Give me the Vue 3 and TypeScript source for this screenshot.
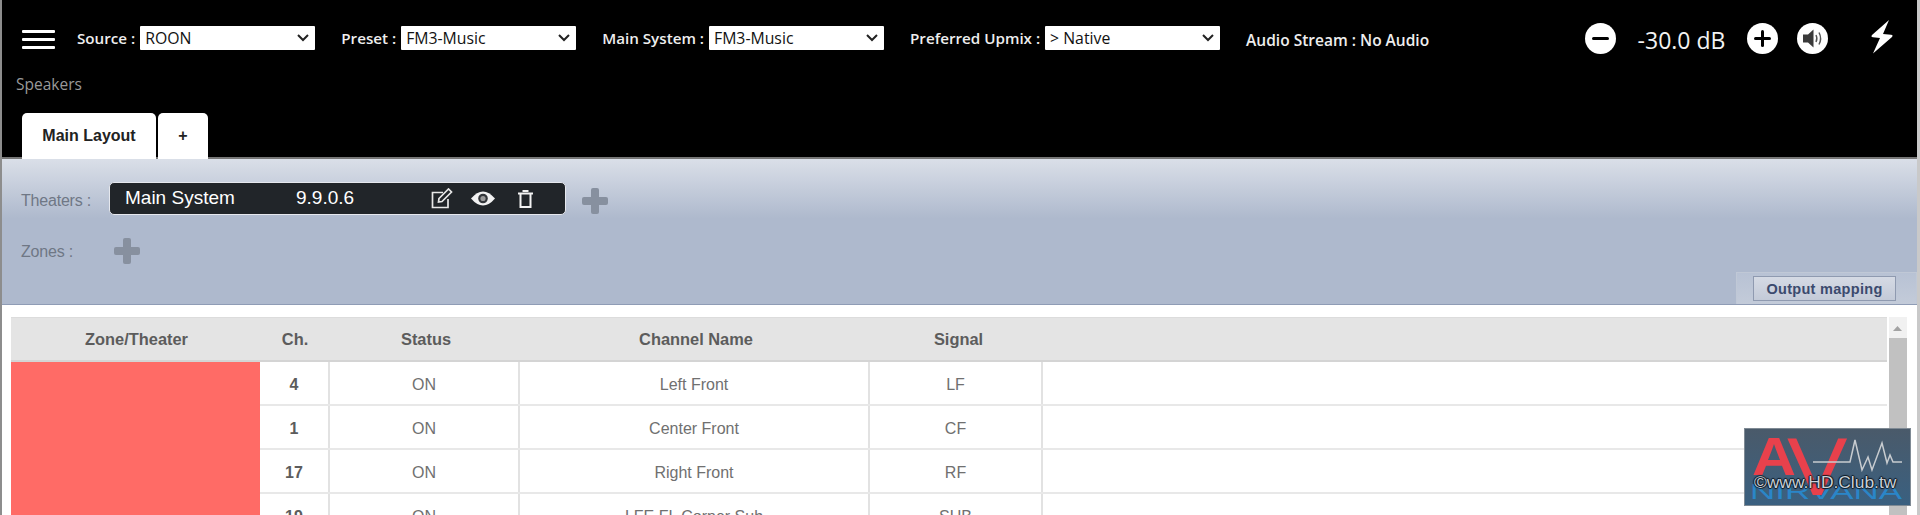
<script setup lang="ts">
interface Row { ch: string; status: string; name: string; signal: string }
const rows: Row[] = [
  { ch: '4', status: 'ON', name: 'Left Front', signal: 'LF' },
  { ch: '1', status: 'ON', name: 'Center Front', signal: 'CF' },
  { ch: '17', status: 'ON', name: 'Right Front', signal: 'RF' },
  { ch: '19', status: 'ON', name: 'LFE FL Corner Sub', signal: 'SUB' },
]
const selects = [
  { label: 'Source :', value: 'ROON' },
  { label: 'Preset :', value: 'FM3-Music' },
  { label: 'Main System :', value: 'FM3-Music' },
  { label: 'Preferred Upmix :', value: '> Native' },
]
</script>

<template>
  <div class="page">
    <header class="top">
      <div class="bar">
        <button class="burger" aria-label="Menu"><i></i><i></i><i></i></button>
        <label v-for="s in selects" :key="s.label" class="field">
          <span>{{ s.label }}</span>
          <select><option>{{ s.value }}</option></select>
        </label>
        <span class="stream">Audio Stream : No Audio</span>
        <div class="volume">
          <svg width="31" height="31" viewBox="0 0 31 31"><circle cx="15.5" cy="15.5" r="15.5" fill="#fff"/><rect x="7" y="14" width="17" height="3" rx="1.5" fill="#000"/></svg>
          <span class="db">-30.0 dB</span>
          <svg width="31" height="31" viewBox="0 0 31 31"><circle cx="15.5" cy="15.5" r="15.5" fill="#fff"/><rect x="7" y="14" width="17" height="3" rx="1.5" fill="#000"/><rect x="14" y="7" width="3" height="17" rx="1.5" fill="#000"/></svg>
          <svg class="spk" width="31" height="31" viewBox="0 0 31 31"><circle cx="15.5" cy="15.5" r="15.5" fill="#fff"/><path d="M6 11.500h5l5.500-5v18l-5.500-5H6z" fill="#3a3a3a"/><path d="M19 12q1.800 3.500 0 7M22 9.500q3.200 6 0 12" fill="none" stroke="#555" stroke-width="1.400"/></svg>
        </div>
        <svg class="bolt" width="24" height="34" viewBox="0 0 24 34"><path d="M19 0 2 15q-1.500 2 1 2.200L10 18 3 33.500 22 17q1.500-2-1-2.200L13 14z" fill="#fff"/></svg>
      </div>
      <div class="crumb">Speakers</div>
      <nav class="tabs">
        <a class="tab main">Main Layout</a>
        <a class="tab add">+</a>
      </nav>
    </header>

    <section class="panel">
      <div class="line theaters">
        <span class="cap">Theaters :</span>
        <div class="theater">
          <span class="t-name">Main System</span>
          <span class="t-ver">9.9.0.6</span>
          <svg class="i-edit" width="22" height="21" viewBox="0 0 22 21" fill="none" stroke="#e8e8e8" stroke-width="1.700"><path d="M17 11v8.500H1.500V4.500H12"/><path d="M8 10.500 17.500 1l3 3L11 13.500l-3.500.5z"/></svg>
          <svg class="i-eye" width="24" height="17" viewBox="0 0 24 17"><path d="M0 8.500q12-14 24 0q-12 14-24 0z" fill="#f2f2f2"/><circle cx="12" cy="8.500" r="4.800" fill="#33363a"/><circle cx="12" cy="8.500" r="2.600" fill="#9a9a9a"/></svg>
          <svg class="i-trash" width="15" height="18" viewBox="0 0 15 18" fill="none" stroke="#f2f2f2" stroke-width="2"><path d="M0 3.500h15"/><path d="M4.500 1h6"/><path d="M2.500 4v13h10V4"/></svg>
        </div>
        <span class="plus" aria-label="Add theater"></span>
      </div>
      <div class="line zones">
        <span class="cap">Zones :</span>
        <span class="plus" aria-label="Add zone"></span>
      </div>
      <div class="mapping"><button>Output mapping</button></div>
    </section>

    <section class="content">
      <div class="table">
        <div class="thead">
          <div class="c zone">Zone/Theater</div>
          <div class="c ch">Ch.</div>
          <div class="c st">Status</div>
          <div class="c nm">Channel Name</div>
          <div class="c sg">Signal</div>
        </div>
        <div class="tbody">
          <div class="swatch"></div>
          <div class="rows">
            <div v-for="r in rows" :key="r.ch" class="row">
              <div class="c ch"><b>{{ r.ch }}</b></div>
              <div class="c st">{{ r.status }}</div>
              <div class="c nm">{{ r.name }}</div>
              <div class="c sg">{{ r.signal }}</div>
              <div class="c rest"></div>
            </div>
          </div>
        </div>
      </div>
      <div class="scroll">
        <svg width="17" height="21" viewBox="0 0 17 21"><path d="M4 14l4.500-5 4.500 5z" fill="#a3a3a3"/></svg>
        <div class="thumb"></div>
      </div>
    </section>

    <div class="mark">
      <svg width="165" height="76" viewBox="0 0 165 76">
        <text x="5" y="70" class="nir" textLength="152" lengthAdjust="spacingAndGlyphs">NIRVANA</text>
        <text class="lt-a" transform="translate(7 46) scale(1.15 1)">A</text>
        <text class="lt-v" transform="translate(42 66) scale(1.12 1)">V</text>
        <polyline points="68,33 105,33 110,11 117,41 123,28 127,41 137,14 142,34 145,26 148,33 157,33" fill="none" stroke="#c8ccd0" stroke-width="1.500"/>
      </svg>
      <span class="copy">©www.HD.Club.tw</span>
    </div>
  </div>
</template>

<style>
html, body { margin: 0; background: #fff; overflow: hidden; }
</style>

<style scoped>
.page { position: relative; width: 1920px; height: 515px; overflow: hidden; box-sizing: border-box; border-left: 2px solid #8d8d8d; border-right: 3px solid #c9c9c9; display: flex; flex-direction: column; font-family: "Liberation Sans", Arial, sans-serif; }
.top { height: 157px; flex: none; background: #000; border-bottom: 2px solid #777; box-sizing: content-box; display: flex; flex-direction: column; font-family: "Open Sans", sans-serif; }
.bar { height: 26px; margin-top: 25px; display: flex; align-items: center; padding-left: 20px; color: #eee; font-size: 15.200px; font-weight: 600; }
.burger { width: 33px; height: 19px; padding: 0; border: 0; background: none; display: flex; flex-direction: column; justify-content: space-between; margin: 2px 22px 0 0; }
.burger i { display: block; height: 3px; background: #fff; border-radius: 1px; }
.field { display: flex; align-items: center; margin-right: 26px; white-space: nowrap; }
.field span { margin-right: 5px; }
.field select { width: 175px; height: 24px; border: 0; border-radius: 1px; padding: 0 5px; background: #fff url("data:image/svg+xml,%3Csvg xmlns='http://www.w3.org/2000/svg' width='12' height='8'%3E%3Cpath d='M1 1l5 5 5-5' fill='none' stroke='%23222' stroke-width='2'/%3E%3C/svg%3E") no-repeat right 6px center; appearance: none; color: #111; font: 500 15.800px "Open Sans", sans-serif; }
.stream { margin-top: 4px; font-size: 15.500px; font-weight: 600; }
.volume { position: absolute; left: 1583px; top: 20px; display: flex; align-items: center; }
.db { width: 131px; text-align: center; color: #f2f2f2; font: 400 23px "Open Sans", sans-serif; padding-top: 4px; }
.spk { margin-left: 19px; }
.bolt { position: absolute; left: 1868px; top: 20px; }
.crumb { margin-top: 24px; padding-left: 14px; color: #999; font-size: 15.500px; line-height: 18px; }
.tabs { display: flex; gap: 2px; margin-top: auto; padding-left: 20px; font-family: "Liberation Sans", sans-serif; }
.tab { background: #fff; color: #222; font-weight: 700; font-size: 16px; height: 46px; margin-bottom: -2px; display: flex; align-items: center; justify-content: center; border-radius: 5px 5px 0 0; }
.tab.main { width: 134px; }
.tab.add { width: 50px; }
.panel { position: relative; height: 146px; flex: none; background: linear-gradient(#dadfe8, #aeb9cd 41%, #aeb9cd); border-bottom: 1px solid #8f9cb5; box-sizing: border-box; color: #6f7785; font-size: 16px; }
.line { position: absolute; left: 19px; display: flex; align-items: center; }
.theaters { top: 23px; }
.zones { top: 80px; }
.cap { width: 88px; letter-spacing: -0.2px; }
.theaters .cap { padding-top: 4px; }
.zones .plus { margin-left: 5px; position: relative; top: -1px; }
.theater { width: 457px; height: 33px; box-sizing: border-box; background: #212529; border: 1px solid #e6e8ee; border-radius: 5px; color: #fff; font-size: 19px; display: flex; align-items: center; padding-left: 15px; margin-right: 17px; }
.t-name { width: 171px; padding-bottom: 1px; }
.t-ver { width: 135px; padding-bottom: 1px; }
.i-eye { margin-left: 18px; }
.i-trash { margin-left: 23px; }
.plus { position: relative; display: block; width: 26px; height: 26px; }
.theaters .plus { top: 2px; left: -1px; }
.plus::before, .plus::after { content: ""; position: absolute; background: #87909f; border-radius: 2px; }
.plus::before { left: 0; right: 0; top: 9px; height: 8px; }
.plus::after { top: 0; bottom: 0; left: 9px; width: 8px; }
.mapping { position: absolute; right: 0; bottom: 0; width: 181px; height: 32px; box-sizing: border-box; background: linear-gradient(#b8c2d4, #c3cbd9); border: 1px solid #c0c8d6; border-bottom: 0; }
.mapping button { position: absolute; left: 16px; top: 3px; width: 143px; height: 25px; padding: 0; border: 1px solid #8f9ab0; background: linear-gradient(#d5dae4, #c3cad8); color: #3b4a6e; font: 700 14.500px "Liberation Sans", sans-serif; letter-spacing: .3px; }
.content { flex: 1; min-height: 0; display: flex; padding: 12px 10px 0 9px; gap: 2px; background: #fff; }
.table { width: 1877px; color: #707070; font-size: 16px; }
.thead { display: flex; height: 45px; padding-top: 1px; background: #e4e4e4; border-top: 1px solid #dcdcdc; box-sizing: border-box; border-bottom: 2px solid #d4d4d4; font-size: 16.400px; font-weight: 700; color: #5c5c5c; }
.thead .zone, .thead .nm, .thead .st { padding-left: 2px; }
.thead .sg { padding-left: 4px; }
.c { display: flex; align-items: center; justify-content: center; box-sizing: border-box; }
.zone { width: 249px; }
.ch { width: 70px; }
.st { width: 190px; }
.nm { width: 350px; }
.sg { width: 173px; }
.tbody { display: flex; }
.swatch { width: 249px; background: #ff6b66; flex: none; }
.rows { flex: 1; }
.row { display: flex; height: 44px; border-bottom: 2px solid #e8e8e8; box-sizing: border-box; }
.row .c { border-right: 2px solid #e2e2e2; padding-top: 4px; }
.row .ch b { color: #5c5c5c; }
.rest { flex: 1; }
.row .rest { border-right: 0; }
.scroll { width: 18px; background: #f1f1f1; display: flex; flex-direction: column; }
.thumb { flex: 1; background: #c1c1c1; }
.mark { position: absolute; left: 1743px; top: 429px; width: 165px; height: 76px; background: linear-gradient(#4a5a6a, #3a6080); box-shadow: 0 0 0 1px #7f8a94; }
.mark svg { display: block; }
.lt-a { font: 700 53px "Liberation Sans", sans-serif; fill: #e8414c; }
.lt-v { font: 400 81px "Liberation Sans", sans-serif; fill: #e8414c; }
.nir { font: 400 22px "Liberation Sans", sans-serif; fill: #2a86c8; }
.copy { position: absolute; left: 9px; top: 43px; color: #c8d0d8; font: 400 17.400px "Liberation Sans", sans-serif; text-shadow: 1px 0 1px #0c1620, -1px 0 1px #0c1620, 0 1px 1px #0c1620, 0 -1px 1px #0c1620; white-space: nowrap; }
</style>
